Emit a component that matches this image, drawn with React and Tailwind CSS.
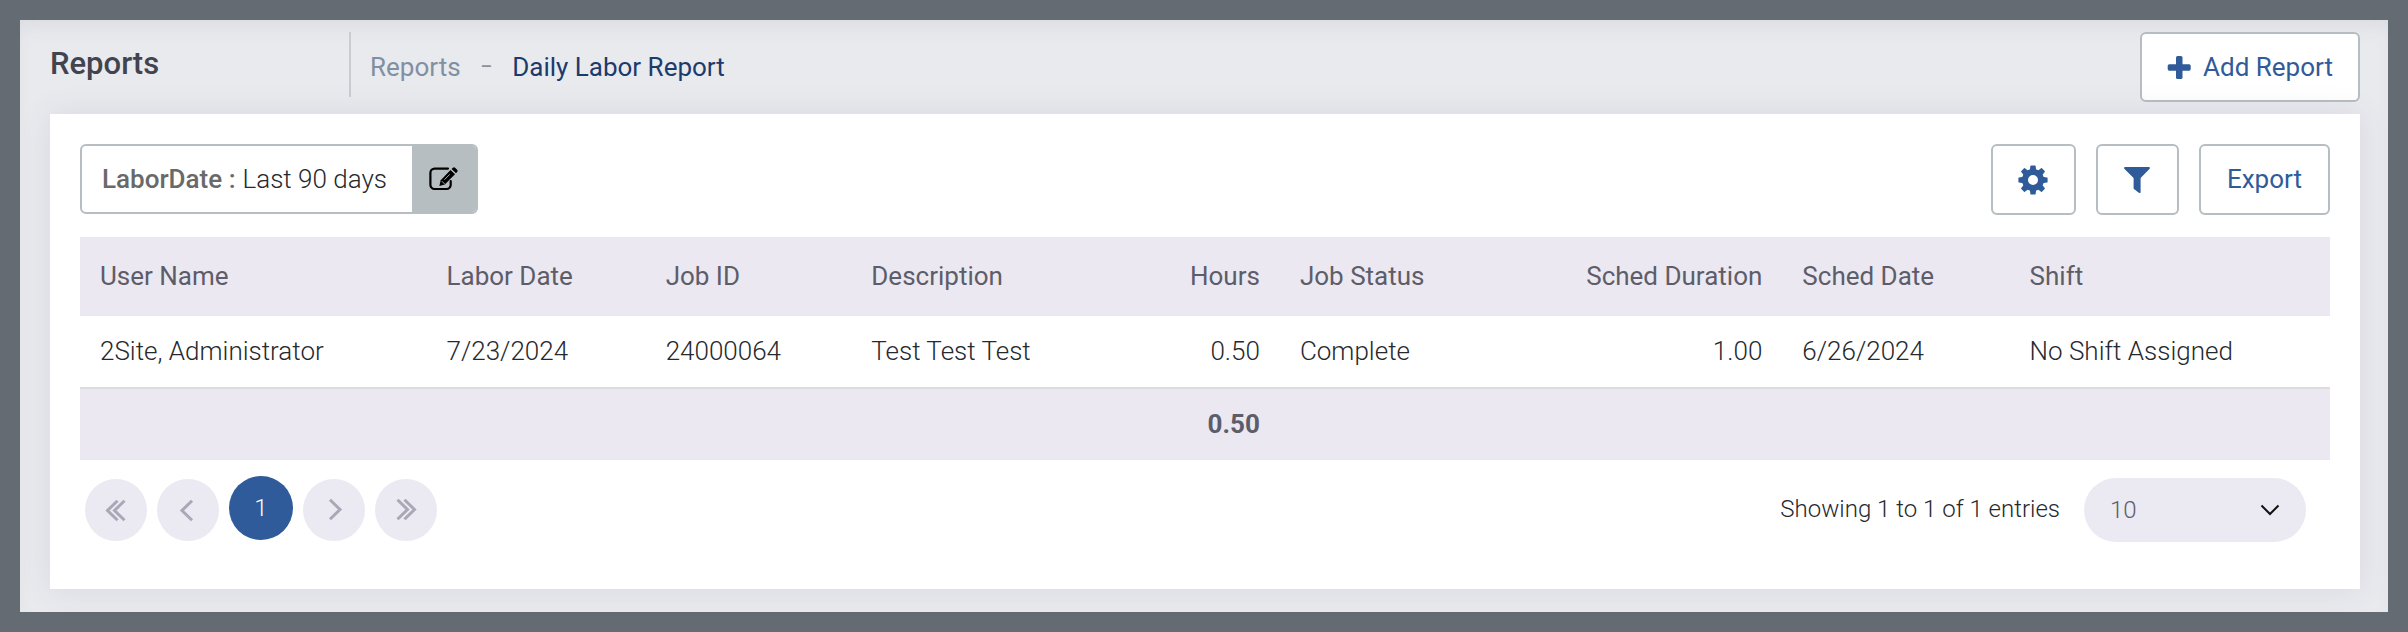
const columns = [
  { key: "user", label: "User Name", value: "2Site, Administrator", width: "w-[15.4%]" },
  { key: "laborDate", label: "Labor Date", value: "7/23/2024", width: "w-[9.74%]" },
  { key: "job", label: "Job ID", value: "24000064", width: "w-[9.14%]" },
  { key: "description", label: "Description", value: "Test Test Test", width: "w-[12%]" },
  { key: "hours", label: "Hours", value: "0.50", total: "0.50", right: true, width: "w-[7.05%]" },
  { key: "status", label: "Job Status", value: "Complete", width: "w-[11%]" },
  { key: "duration", label: "Sched Duration", value: "1.00", right: true, width: "w-[11.33%]" },
  { key: "schedDate", label: "Sched Date", value: "6/26/2024", width: "w-[10.1%]" },
  { key: "shift", label: "Shift", value: "No Shift Assigned", width: "" },
];

const gearTeeth = [0, 45, 90, 135, 180, 225, 270, 315];

function OutlineButton({ label, className = "", children }) {
  return (
    <button
      type="button"
      aria-label={label}
      className={`flex items-center justify-center rounded-md border-2 border-[#b6bec1] bg-white text-[#305b9a] ${className}`}
    >
      {children}
    </button>
  );
}

function PlusIcon() {
  return (
    <svg viewBox="0 0 24 24" className="h-6 w-6" fill="currentColor" aria-hidden="true">
      <rect x="9" y="1" width="6.500" height="23" rx="1.600" />
      <rect x="0.700" y="9.200" width="23" height="6.500" rx="1.600" />
    </svg>
  );
}

function GearIcon() {
  return (
    <svg viewBox="0 0 30 30" className="h-[30px] w-[30px]" fill="currentColor" aria-hidden="true">
      <circle cx="15" cy="15" r="8" fill="none" stroke="currentColor" strokeWidth="6" />
      {gearTeeth.map((angle) => (
        <path key={angle} d="M11.800 5.500 12.400 1Q12.500 0.400 13.100 0.400H16.900Q17.500 0.400 17.600 1L18.200 5.500Z" transform={`rotate(${angle} 15 15)`} />
      ))}
    </svg>
  );
}

function FunnelIcon() {
  return (
    <svg viewBox="0 0 26 26" className="h-[26px] w-[26px]" fill="currentColor" aria-hidden="true">
      <path d="M0.800 0H25.200Q26.400 0.600 25.700 1.700L16.600 11V25.300Q16.300 26.400 15.200 25.900L10.200 22.300Q9.600 21.900 9.600 21.300V11L0.300 1.700Q-0.400 0.600 0.800 0Z" />
    </svg>
  );
}

function EditIcon() {
  return (
    <svg viewBox="0 0 29 24" className="h-6 w-[29px]" fill="none" aria-hidden="true">
      <path d="M19 1.600H5.600a4.200 4.200 0 0 0-4.200 4.200v12a4.200 4.200 0 0 0 4.200 4.200H17.500a4.200 4.200 0 0 0 4.200-4.200V14" stroke="#000" strokeWidth="2.200" strokeLinecap="round" />
      <path d="M21.500 3 26 7.300 15.800 17.600 10.400 19 11.700 13.200Z" fill="#000" />
      <path d="m22.600 2 1.300-1.200a1.600 1.600 0 0 1 2.200 0l2 2a1.600 1.600 0 0 1 0 2.200L27 6.300Z" fill="#000" />
      <path d="m12.800 14.200 3 3M15.500 12.600l5.300-5.300" stroke="#b6bec1" strokeWidth="0.900" />
    </svg>
  );
}

function Chevrons({ direction, double }) {
  return (
    <svg
      viewBox="0 0 24 24"
      className={direction === "right" ? "h-6 w-6 rotate-180" : "h-6 w-6"}
      fill="none"
      stroke="#a9a8b6"
      strokeWidth="3"
      aria-hidden="true"
    >
      {double ? (
        <>
          <path d="M13.500 2.700 3.500 12.500l10 9.800" />
          <path d="M20.500 2.700 10.500 12.500l10 9.800" />
        </>
      ) : (
        <path d="M16 2.700 6 12.500l10 9.800" />
      )}
    </svg>
  );
}

function PageButton({ label, children }) {
  return (
    <button type="button" aria-label={label} className="mt-[3px] flex h-[62px] w-[62px] items-center justify-center rounded-full bg-[#ebe9f2]">
      {children}
    </button>
  );
}

export default function App() {
  return (
    <div className="flex min-h-screen flex-col border-20 border-[#646b72] bg-[#e9eaee] pr-[28px] pb-[23px] pl-[30px] font-['Roboto',sans-serif] text-[26px] leading-8 text-[#26292e] shadow-[inset_0_12px_24px_-12px_rgba(80,80,95,0.13)]">
      <header className="flex items-start pt-3 pb-3">
        <h1 className="w-[299px] pt-4 text-[31px] font-medium text-[#43434d]">Reports</h1>
        <nav aria-label="Breadcrumb" className="flex h-[65px] items-center border-l-2 border-[#c9ccd1] pt-1 pl-[19px]">
          <a href="#reports" className="text-[#8090a3]">Reports</a>
          <span className="px-5 text-lg font-medium text-[#8a8f98]">–</span>
          <a href="#daily" className="text-[#1d3a6d]">Daily Labor Report</a>
        </nav>
        <OutlineButton className="ml-auto h-[70px] gap-3 px-[25px]">
          <PlusIcon />
          <span>Add Report</span>
        </OutlineButton>
      </header>

      <main className="flex-1 bg-white px-[30px] pt-[30px] shadow-[0_0_30px_rgba(82,63,105,0.1)]">
        <div className="mb-[22px] flex items-start">
          <div className="flex h-[70px] overflow-hidden rounded-md border-2 border-[#b6bec1]">
            <div className="flex items-center pr-[25px] pl-5 font-light">
              <b className="mr-[7px] font-medium text-[#696969]">LaborDate :</b>Last 90 days
            </div>
            <button type="button" aria-label="Edit labor date" className="flex w-16 items-center justify-center bg-[#b6bec1]">
              <EditIcon />
            </button>
          </div>
          <div className="ml-auto flex gap-5">
            <OutlineButton label="Settings" className="h-[71px] w-[85px]">
              <GearIcon />
            </OutlineButton>
            <OutlineButton label="Filter" className="h-[71px] w-[83px]">
              <FunnelIcon />
            </OutlineButton>
            <OutlineButton className="h-[71px] px-[26px] pb-[2px]">Export</OutlineButton>
          </div>
        </div>

        <table className="w-full table-fixed border-collapse">
          <thead className="bg-[#ebe8f2] text-[#5d5d69]">
            <tr className="h-[79px]">
              {columns.map((c) => (
                <th key={c.key} scope="col" className={`px-5 pb-[2px] font-normal ${c.right ? "text-right" : "text-left"} ${c.width}`}>
                  {c.label}
                </th>
              ))}
            </tr>
          </thead>
          <tbody>
            <tr className="h-[72px] font-light">
              {columns.map((c) => (
                <td key={c.key} className={`px-5 pb-[2px] ${c.right ? "text-right" : "text-left"}`}>
                  {c.value}
                </td>
              ))}
            </tr>
          </tbody>
          <tfoot className="border-t-2 border-[#dcdcdc] bg-[#ebe8f2] text-[#5d5d69]">
            <tr className="h-[72px]">
              {columns.map((c) => (
                <td key={c.key} className="px-5 pb-[2px] text-right font-bold">
                  {c.total}
                </td>
              ))}
            </tr>
          </tfoot>
        </table>

        <div className="flex items-start justify-between pt-4 pr-6 pl-[5px]">
          <nav aria-label="Pagination" className="flex gap-[10px]">
            <PageButton label="First page"><Chevrons double /></PageButton>
            <PageButton label="Previous page"><Chevrons /></PageButton>
            <button type="button" aria-current="page" className="h-16 w-16 rounded-full bg-[#305b9a] text-2xl font-light text-white">1</button>
            <PageButton label="Next page"><Chevrons direction="right" /></PageButton>
            <PageButton label="Last page"><Chevrons direction="right" double /></PageButton>
          </nav>
          <div className="flex items-center gap-6 font-light">
            <label htmlFor="page-size" className="text-2xl">Showing 1 to 1 of 1 entries</label>
            <div className="relative mt-[2px]">
              <select id="page-size" defaultValue="10" className="h-16 w-[222px] appearance-none rounded-[32px] bg-[#ebe9f2] px-[26px] text-2xl font-light text-[#5d5d69]">
                <option>10</option>
                <option>25</option>
                <option>50</option>
              </select>
              <svg viewBox="0 0 20 12" className="pointer-events-none absolute top-[26px] right-[26px] h-3 w-5" fill="none" stroke="#111" strokeWidth="2" aria-hidden="true">
                <path d="m1.500 1.500 8.500 8.500 8.500-8.500" />
              </svg>
            </div>
          </div>
        </div>
      </main>
    </div>
  );
}
